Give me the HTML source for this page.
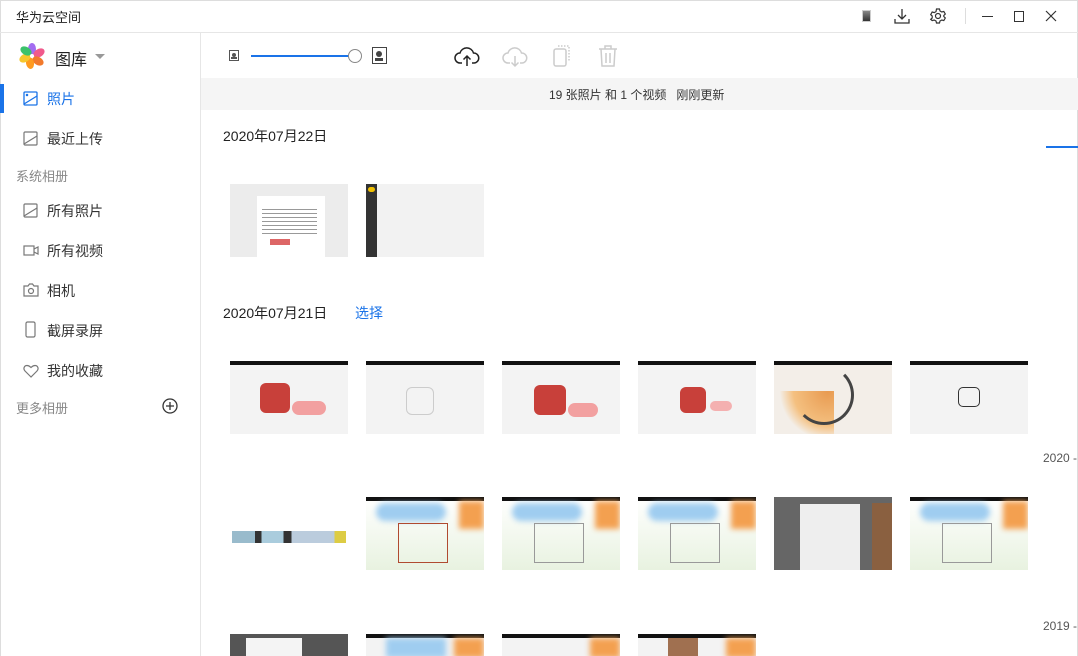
<!DOCTYPE html>
<html><head><meta charset="utf-8"><style>
*{box-sizing:border-box;margin:0;padding:0}
html,body{width:1078px;height:656px;overflow:hidden}
body{background:#fff;font-family:"Liberation Sans","Noto Sans CJK SC",sans-serif;color:#222;font-size:13px}
#root{position:relative;width:1078px;height:656px;overflow:hidden}
.abs{position:absolute}
.win{position:absolute;left:0;top:0;width:1078px;height:656px;border:1px solid #ddd;border-bottom:none}
.title{left:16px;top:7px;font-size:13px;color:#222}
.side{left:0;top:33px;width:201px;height:623px;border-right:1px solid #e6e6e6}
.nav{position:absolute;left:47px;font-size:14px;color:#333}
.ico{position:absolute;left:23px}
.grp{position:absolute;left:16px;font-size:13px;color:#888}
.th{position:absolute;width:118px;height:73px;background:#f3f3f3;overflow:hidden}
.th .bar{position:absolute;left:0;top:0;width:100%;height:4px;background:#111}
.date{position:absolute;left:223px;font-size:14px;color:#222}
</style></head><body><div id="root">
<div class="win"></div>
<div class="abs" style="left:0;top:32px;width:1078px;height:1px;background:#e6e6e6"></div>
<div class="abs title">华为云空间</div>
<div class="abs" style="left:862px;top:10px;width:9px;height:12px;background:linear-gradient(#888,#333);border:1px solid #ccc"></div>
<svg class="abs" style="left:893px;top:7px" width="18" height="18" viewBox="0 0 18 18" fill="none" stroke="#333" stroke-width="1.3"><path d="M9 2v10M5 8l4 4 4-4M2 12v4h14v-4"/></svg>
<svg class="abs" style="left:929px;top:7px" width="18" height="18" viewBox="0 0 18 18" fill="none" stroke="#333" stroke-width="1.2"><circle cx="9" cy="9" r="2.5"/><path d="M7.5 2h3l.5 2 1.8 1 2-.6 1.5 2.6-1.5 1.5v1l1.5 1.5-1.5 2.6-2-.6-1.8 1-.5 2h-3l-.5-2-1.8-1-2 .6L1.7 12.4 3.2 11v-2L1.7 7.6 3.2 5l2 .6L7 4.6z"/></svg>
<div class="abs" style="left:965px;top:8px;width:1px;height:16px;background:#ddd"></div>
<div class="abs" style="left:982px;top:16px;width:11px;height:1px;background:#333"></div>
<div class="abs" style="left:1014px;top:11px;width:10px;height:11px;border:1.2px solid #333"></div>
<svg class="abs" style="left:1045px;top:10px" width="12" height="12" viewBox="0 0 12 12" stroke="#333" stroke-width="1.2"><path d="M1 1l10 10M11 1L1 11"/></svg>

<div class="abs side"></div>
<svg class="abs" style="left:17px;top:41px" width="30" height="30" viewBox="0 0 30 30">
<ellipse cx="15" cy="8" rx="4" ry="6" fill="#a36cf0"/>
<ellipse cx="22" cy="12" rx="4" ry="6" fill="#f05a8c" transform="rotate(60 22 12)"/>
<ellipse cx="21" cy="20" rx="4" ry="6" fill="#f27a2c" transform="rotate(120 21 20)"/>
<ellipse cx="13" cy="22" rx="4" ry="6" fill="#ff9a1f" transform="rotate(170 13 22)"/>
<ellipse cx="8" cy="17" rx="4" ry="6" fill="#f6c72d" transform="rotate(240 8 17)"/>
<ellipse cx="9" cy="10" rx="4" ry="6" fill="#3bc26b" transform="rotate(300 9 10)"/>
<circle cx="15" cy="15" r="2" fill="#fff"/></svg>
<div class="abs" style="left:55px;top:46px;font-size:16px;color:#222">图库</div>
<div class="abs" style="left:95px;top:54px;border:5px solid transparent;border-top:5px solid #999"></div>

<div class="abs" style="left:0;top:84px;width:4px;height:29px;background:#1a73e8"></div>
<svg class="ico" style="top:91px" width="15" height="15" viewBox="0 0 15 15" fill="none" stroke="#1a73e8" stroke-width="1.3"><rect x="1" y="1" width="13" height="13" rx="1"/><path d="M1 13L14 5"/><circle cx="4" cy="4" r=".6"/></svg>
<div class="nav" style="top:89px;color:#1a73e8">照片</div>
<svg class="ico" style="top:131px" width="15" height="15" viewBox="0 0 15 15" fill="none" stroke="#777" stroke-width="1.2"><rect x="1" y="1" width="13" height="13" rx="1"/><path d="M1 13L14 5"/></svg>
<div class="nav" style="top:129px">最近上传</div>
<div class="grp" style="top:166px">系统相册</div>
<svg class="ico" style="top:203px" width="15" height="15" viewBox="0 0 15 15" fill="none" stroke="#777" stroke-width="1.2"><rect x="1" y="1" width="13" height="13" rx="1"/><path d="M1 13L14 5"/></svg>
<div class="nav" style="top:201px">所有照片</div>
<svg class="ico" style="top:244px" width="16" height="13" viewBox="0 0 16 13" fill="none" stroke="#777" stroke-width="1.2"><rect x="1" y="2" width="10" height="9"/><path d="M11 5l4-2v7l-4-2"/></svg>
<div class="nav" style="top:241px">所有视频</div>
<svg class="ico" style="top:283px" width="16" height="14" viewBox="0 0 16 14" fill="none" stroke="#777" stroke-width="1.2"><path d="M1 3h4l1.5-2h3L11 3h4v10H1z"/><circle cx="8" cy="8" r="2.5"/></svg>
<div class="nav" style="top:281px">相机</div>
<svg class="ico" style="top:321px;left:25px" width="11" height="17" viewBox="0 0 11 17" fill="none" stroke="#777" stroke-width="1.2"><rect x="1" y="1" width="9" height="15" rx="1.5"/></svg>
<div class="nav" style="top:321px">截屏录屏</div>
<svg class="ico" style="top:364px" width="16" height="14" viewBox="0 0 16 14" fill="none" stroke="#777" stroke-width="1.2"><path d="M8 13L2 7C0 5 1 1.5 4 1.5 6 1.5 8 3.5 8 3.5S10 1.5 12 1.5C15 1.5 16 5 14 7z"/></svg>
<div class="nav" style="top:361px">我的收藏</div>
<div class="grp" style="top:398px">更多相册</div>
<svg class="abs" style="left:162px;top:398px" width="16" height="16" viewBox="0 0 16 16" fill="none" stroke="#333" stroke-width="1.3"><circle cx="8" cy="8" r="7"/><path d="M4 8h8M8 4v8"/></svg>

<div class="abs" style="left:229px;top:50px;width:10px;height:11px;border:1px solid #555"><div style="position:absolute;left:2px;top:2px;width:4px;height:4px;background:#555;border-radius:50%"></div><div style="position:absolute;left:1px;bottom:1px;width:6px;height:2px;background:#555"></div></div>
<div class="abs" style="left:251px;top:55px;width:98px;height:2px;background:#1a73e8"></div>
<div class="abs" style="left:348px;top:49px;width:14px;height:14px;border:1.5px solid #888;border-radius:50%;background:#fff"></div>
<div class="abs" style="left:372px;top:47px;width:15px;height:17px;border:1.3px solid #444"><div style="position:absolute;left:3px;top:3px;width:6px;height:6px;background:#444;border-radius:50%"></div><div style="position:absolute;left:2px;bottom:2px;width:8px;height:3px;background:#444"></div></div>
<svg class="abs" style="left:454px;top:44px" width="26" height="24" viewBox="0 0 26 24" fill="none" stroke="#222" stroke-width="1.5"><path d="M8 19H6a5 5 0 0 1 0-10 7 7 0 0 1 13.5 0A5 5 0 0 1 20 19h-2"/><path d="M13 22V12M9.5 15.5L13 12l3.5 3.5"/></svg>
<svg class="abs" style="left:502px;top:44px" width="26" height="24" viewBox="0 0 26 24" fill="none" stroke="#ccc" stroke-width="1.5"><path d="M8 19H6a5 5 0 0 1 0-10 7 7 0 0 1 13.5 0A5 5 0 0 1 20 19h-2"/><path d="M13 12v10M9.5 18.5L13 22l3.5-3.5"/></svg>
<svg class="abs" style="left:552px;top:44px" width="20" height="24" viewBox="0 0 20 24" fill="none" stroke="#ccc" stroke-width="1.5"><rect x="2" y="5" width="12" height="17" rx="2"/><path d="M6 2h11v16" stroke-dasharray="1.5 1.5"/></svg>
<svg class="abs" style="left:597px;top:44px" width="22" height="24" viewBox="0 0 22 24" fill="none" stroke="#ccc" stroke-width="1.5"><path d="M2 5h18M8 5V2h6v3M4 5l1 17h12l1-17M9 9v10M13 9v10"/></svg>

<div class="abs" style="left:201px;top:78px;width:877px;height:32px;background:#f5f5f5"></div>
<div class="abs" style="left:549px;top:86px;font-size:12px;color:#333">19 张照片 和 1 个视频 &nbsp; 刚刚更新</div>
<div class="abs" style="left:1046px;top:146px;width:32px;height:2px;background:#1a73e8"></div>
<div class="abs" style="left:1043px;top:451px;font-size:12px;color:#555">2020 -</div>
<div class="abs" style="left:1043px;top:619px;font-size:12px;color:#555">2019 -</div>

<div class="date" style="top:126px">2020年07月22日</div>
<div class="date" style="top:303px">2020年07月21日</div>
<div class="abs" style="left:355px;top:303px;font-size:14px;color:#1a73e8">选择</div>

<div class="th" style="left:230px;top:184px;background:#ececec"><div style="position:absolute;left:27px;top:12px;width:68px;height:61px;background:#fff"></div><div style="position:absolute;left:32px;top:22px;width:55px;height:30px;background:repeating-linear-gradient(#fff 0 3px,#999 3px 4px)"></div><div style="position:absolute;left:40px;top:55px;width:20px;height:6px;background:#d66"></div></div>
<div class="th" style="left:366px;top:184px;background:#f2f2f2"><div style="position:absolute;left:0;top:0;width:11px;height:73px;background:#333"></div><div style="position:absolute;left:2px;top:3px;width:7px;height:5px;background:#f0c000;border-radius:3px"></div></div>

<div class="th" style="left:230px;top:361px"><div class="bar"></div><div style="position:absolute;left:30px;top:22px;width:30px;height:30px;background:#c8403a;border-radius:6px"></div><div style="position:absolute;left:62px;top:40px;width:34px;height:14px;background:#f2a0a0;border-radius:8px"></div></div>
<div class="th" style="left:366px;top:361px"><div class="bar"></div><div style="position:absolute;left:40px;top:26px;width:28px;height:28px;border:1px solid #ccc;border-radius:6px"></div></div>
<div class="th" style="left:502px;top:361px"><div class="bar"></div><div style="position:absolute;left:32px;top:24px;width:32px;height:30px;background:#c8403a;border-radius:6px"></div><div style="position:absolute;left:66px;top:42px;width:30px;height:14px;background:#f2a0a0;border-radius:8px"></div></div>
<div class="th" style="left:638px;top:361px"><div class="bar"></div><div style="position:absolute;left:42px;top:26px;width:26px;height:26px;background:#c8403a;border-radius:6px"></div><div style="position:absolute;left:72px;top:40px;width:22px;height:10px;background:#f4b0b0;border-radius:6px"></div></div>
<div class="th" style="left:774px;top:361px;background:#f3eee8"><div class="bar"></div><div style="position:absolute;left:0;top:30px;width:60px;height:43px;background:radial-gradient(circle at 90% 0,#e89a50,#f4c080 50%,transparent 70%)"></div><div style="position:absolute;left:20px;top:4px;width:60px;height:60px;border:3px solid #444;border-radius:50%;border-color:transparent #444 #444 transparent"></div></div>
<div class="th" style="left:910px;top:361px"><div class="bar"></div><div style="position:absolute;left:48px;top:26px;width:22px;height:20px;border:1.5px solid #333;border-radius:5px"></div></div>

<div class="th" style="left:230px;top:497px;background:#fff"><div style="position:absolute;left:2px;top:34px;width:114px;height:12px;background:linear-gradient(90deg,#9bc 0 20%,#333 20% 26%,#acd 26% 45%,#333 45% 52%,#bcd 52% 90%,#dc4 90%)"></div></div>
<div class="th" style="left:366px;top:497px;background:linear-gradient(#fff,#e8f2e0)"><div class="bar"></div><div style="position:absolute;left:10px;top:6px;width:70px;height:18px;background:#9fcdf0;border-radius:20px;filter:blur(3px)"></div><div style="position:absolute;right:0;top:4px;width:25px;height:28px;background:#f3a050;filter:blur(3px)"></div><div style="position:absolute;left:32px;top:26px;width:50px;height:40px;border:1.5px solid #b04a30"></div></div>
<div class="th" style="left:502px;top:497px;background:linear-gradient(#fff,#e8f2e0)"><div class="bar"></div><div style="position:absolute;left:10px;top:6px;width:70px;height:18px;background:#9fcdf0;border-radius:20px;filter:blur(3px)"></div><div style="position:absolute;right:0;top:4px;width:25px;height:28px;background:#f3a050;filter:blur(3px)"></div><div style="position:absolute;left:32px;top:26px;width:50px;height:40px;border:1px solid #999"></div></div>
<div class="th" style="left:638px;top:497px;background:linear-gradient(#fff,#e8f2e0)"><div class="bar"></div><div style="position:absolute;left:10px;top:6px;width:70px;height:18px;background:#9fcdf0;border-radius:20px;filter:blur(3px)"></div><div style="position:absolute;right:0;top:4px;width:25px;height:28px;background:#f3a050;filter:blur(3px)"></div><div style="position:absolute;left:32px;top:26px;width:50px;height:40px;border:1px solid #999"></div></div>
<div class="th" style="left:774px;top:497px;background:#666"><div style="position:absolute;left:26px;top:7px;width:60px;height:66px;background:#eee"></div><div style="position:absolute;right:0;top:6px;width:20px;height:67px;background:#8a6040"></div></div>
<div class="th" style="left:910px;top:497px;background:linear-gradient(#fff,#e8f2e0)"><div class="bar"></div><div style="position:absolute;left:10px;top:6px;width:70px;height:18px;background:#9fcdf0;border-radius:20px;filter:blur(3px)"></div><div style="position:absolute;right:0;top:4px;width:25px;height:28px;background:#f3a050;filter:blur(3px)"></div><div style="position:absolute;left:32px;top:26px;width:50px;height:40px;border:1px solid #999"></div></div>

<div class="th" style="left:230px;top:634px;height:22px;background:#555"><div style="position:absolute;left:16px;top:4px;width:56px;height:30px;background:#f4f4f4"></div></div>
<div class="th" style="left:366px;top:634px;height:22px"><div class="bar"></div><div style="position:absolute;left:20px;top:4px;width:60px;height:20px;background:#9fcdf0;filter:blur(3px)"></div><div style="position:absolute;right:0;top:4px;width:30px;height:20px;background:#f3a050;filter:blur(3px)"></div></div>
<div class="th" style="left:502px;top:634px;height:22px"><div class="bar"></div><div style="position:absolute;right:0;top:4px;width:30px;height:20px;background:#f3a050;filter:blur(3px)"></div></div>
<div class="th" style="left:638px;top:634px;height:22px"><div class="bar"></div><div style="position:absolute;left:30px;top:4px;width:30px;height:20px;background:#a07050"></div><div style="position:absolute;right:0;top:4px;width:30px;height:20px;background:#f3a050;filter:blur(3px)"></div></div>
</div></body></html>
